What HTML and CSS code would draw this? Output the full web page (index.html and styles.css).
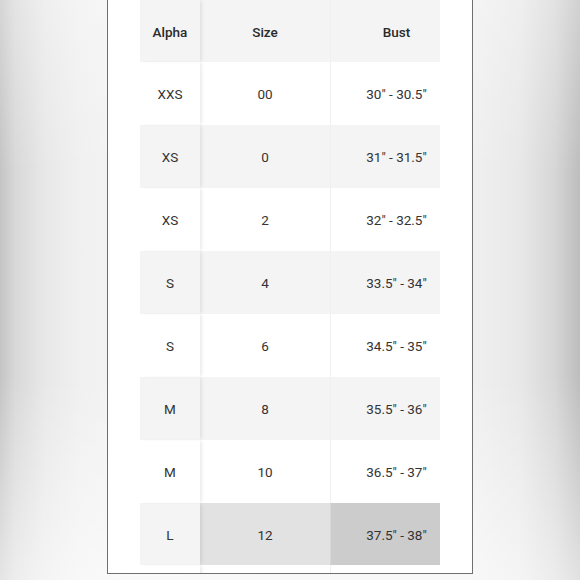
FILE: index.html
```html
<!DOCTYPE html>
<html>
<head>
<meta charset="utf-8">
<link rel="stylesheet" href="styles.css">
</head>
<body>
<div class="card">
  <div class="chart">
    <div class="row head"><div class="c alpha">Alpha</div><div class="c size">Size</div><div class="c bust">Bust</div></div>
    <div class="row"><div class="c alpha">XXS</div><div class="c size">00</div><div class="c bust">30" - 30.5"</div></div>
    <div class="row alt"><div class="c alpha">XS</div><div class="c size">0</div><div class="c bust">31" - 31.5"</div></div>
    <div class="row"><div class="c alpha">XS</div><div class="c size">2</div><div class="c bust">32" - 32.5"</div></div>
    <div class="row alt"><div class="c alpha">S</div><div class="c size">4</div><div class="c bust">33.5" - 34"</div></div>
    <div class="row"><div class="c alpha">S</div><div class="c size">6</div><div class="c bust">34.5" - 35"</div></div>
    <div class="row alt"><div class="c alpha">M</div><div class="c size">8</div><div class="c bust">35.5" - 36"</div></div>
    <div class="row"><div class="c alpha">M</div><div class="c size">10</div><div class="c bust">36.5" - 37"</div></div>
    <div class="row alt hl"><div class="c alpha">L</div><div class="c size">12</div><div class="c bust">37.5" - 38"</div></div>
    <div class="row"><div class="c alpha"></div><div class="c size"></div><div class="c bust"></div></div>
  </div>
</div>
</body>
</html>
```
FILE: styles.css
```css
html, body {
  margin: 0;
  padding: 0;
}
body {
  width: 580px;
  height: 580px;
  overflow: hidden;
  font-family: Roboto, "Liberation Sans", sans-serif;
  color: #333;
  background:
    linear-gradient(to bottom, rgba(255,255,255,0.3) 0%, rgba(255,255,255,0) 30%, rgba(255,255,255,0) 65%, rgba(255,255,255,0.55) 100%),
    linear-gradient(to right, #c4c4c4 0px, #d8d8d8 15px, #e8e8e8 45px, #f0f0f0 80px, #f2f2f2 107px, #f0f0f0 472px, #e8e8e8 520px, #d6d6d6 555px, #bdbdbd 580px);
}
.card {
  margin-left: 107px;
  width: 332px;
  height: 573px;
  background: #fff;
  border-left: 1px solid #6f6f6f;
  border-right: 1px solid #6f6f6f;
  border-bottom: 1px solid #6f6f6f;
  padding-left: 32px;
  overflow: hidden;
}
.chart {
  width: 300px;
  display: flex;
  flex-direction: column;
}
.row {
  display: grid;
  grid-template-columns: 60px 131px 109px;
  height: 63px;
  background: #fff;
}
.row.head {
  height: 62px;
  font-weight: 500;
  color: #2a2a2a;
}
.row.head, .row.alt {
  background: #f4f4f4;
}
.c {
  display: flex;
  align-items: center;
  justify-content: center;
  font-size: 13.5px;
  line-height: 1;
  padding-top: 3px;
}
.alpha {
  position: relative;
  z-index: 1;
  box-shadow: 3px 0 3px -1px rgba(0,0,0,0.08);
}
.size {
  border-right: 1px solid #f0f0f0;
}
.bust {
  padding-left: 22px;
}
.row.hl {
  height: 62px;
}
.row.hl .size {
  background: #e2e2e2;
  border-right-color: #d8d8d8;
}
.row.hl .bust {
  background: #cccccc;
}
```
